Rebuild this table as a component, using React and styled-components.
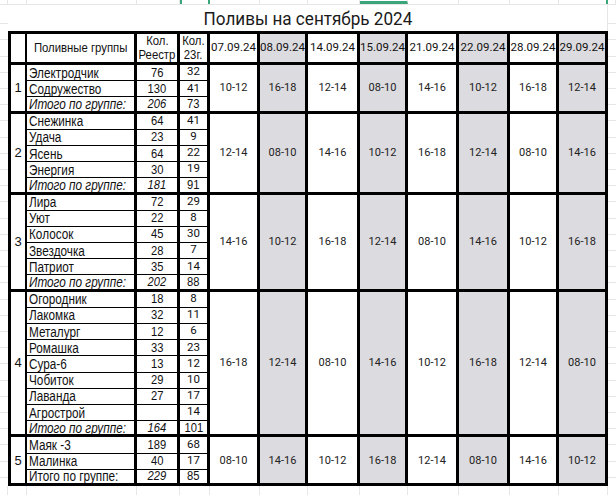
import React from "react";
import styled, { createGlobalStyle, css } from "styled-components";

const ARIAL = `"Liberation Sans", Arial, sans-serif`;
const ROBOTO = `Roboto, "Noto Sans", sans-serif`;

const COLS = [16, 110, 43, 30, 50, 48, 52, 48, 51, 51, 49, 49];
const GRAY = "#dcdbdf";
const GRID = "#e6e6e6";

const DATES = ["07.09.24", "08.09.24", "14.09.24", "15.09.24", "21.09.24", "22.09.24", "28.09.24", "29.09.24"];

const GROUPS = [
  {
    n: 1,
    rows: [["Электродчик", 76, 32], ["Содружество", 130, 41]],
    total: [206, 73],
    times: ["10-12", "16-18", "12-14", "08-10", "14-16", "10-12", "16-18", "12-14"],
  },
  {
    n: 2,
    rows: [["Снежинка", 64, 41], ["Удача", 23, 9], ["Ясень", 64, 22], ["Энергия", 30, 19]],
    total: [181, 91],
    times: ["12-14", "08-10", "14-16", "10-12", "16-18", "12-14", "08-10", "14-16"],
  },
  {
    n: 3,
    rows: [["Лира", 72, 29], ["Уют", 22, 8], ["Колосок", 45, 30], ["Звездочка", 28, 7], ["Патриот", 35, 14]],
    total: [202, 88],
    times: ["14-16", "10-12", "16-18", "12-14", "08-10", "14-16", "10-12", "16-18"],
  },
  {
    n: 4,
    rows: [
      ["Огородник", 18, 8], ["Лакомка", 32, 11], ["Металург", 12, 6], ["Ромашка", 33, 23],
      ["Сура-6", 13, 12], ["Чобиток", 29, 10], ["Лаванда", 27, 17], ["Агрострой", "", 14],
    ],
    total: [164, 101],
    times: ["16-18", "12-14", "08-10", "14-16", "10-12", "16-18", "12-14", "08-10"],
  },
  {
    n: 5,
    rows: [["Маяк -3", 189, 68], ["Малинка", 40, 17]],
    total: [229, 85],
    plainTotal: true,
    times: ["08-10", "14-16", "10-12", "16-18", "12-14", "08-10", "14-16", "10-12"],
  },
];

const GlobalStyle = createGlobalStyle`
  * { box-sizing: border-box; }
  html, body { margin: 0; padding: 0; background: #fff; }
  body { font-family: ${ROBOTO}; color: #111; }
`;

const Page = styled.div`
  width: 616px;
  height: 495px;
  overflow: hidden;
  display: flex;
  flex-direction: column;
  background: #fff;
`;

const TopStrip = styled.div`
  display: flex;
  height: 5px;
  flex: none;
  border-bottom: 1px solid ${GRID};
`;

const StripCell = styled.div`
  flex: none;
  width: ${(p) => p.$w}px;
  border-right: 1px solid ${GRID};
  ${(p) => p.$grow && css`flex: 1;`}
  ${(p) => p.$sideMark && css`
    border-left: 2px solid #3aa57b;
    border-right: 2px solid #3aa57b;
  `}
  ${(p) => p.$baseMark && css`
    border-bottom: 3px solid #3aa57b;
  `}
  ${(p) => p.$edgeMark && css`
    border-right: 2px solid #3aa57b;
  `}
`;

const Middle = styled.div`
  display: flex;
  flex: none;
`;

const Gutter = styled.div`
  flex: none;
  width: 8px;
  background-image: repeating-linear-gradient(
    to bottom,
    transparent 0,
    transparent 15.2px,
    ${GRID} 15.2px,
    ${GRID} 16.2px
  );
  background-position: 0 3px;
`;

const Sheet = styled.div`
  width: 600px;
  flex: none;
  display: flex;
  flex-direction: column;
`;

const Title = styled.div`
  height: 26px;
  display: flex;
  align-items: flex-end;
  justify-content: center;
  padding-bottom: 1px;
  font-family: ${ROBOTO};
  font-size: 19px;
  color: #1a1a1a;
  border-right: 1px solid ${GRID};
`;

/* the sheet renders its text horizontally compressed, like a narrow face */
const Squeeze = styled.span`
  display: inline-block;
  white-space: nowrap;
  transform: scaleX(${(p) => p.$k || 0.84});
  transform-origin: ${(p) => (p.$left ? "left center" : "center")};
`;

const Table = styled.div`
  display: grid;
  grid-template-columns: ${COLS.map((c) => `${c}px`).join(" ")};
  grid-template-rows: 31px;
  grid-auto-rows: 16.2px;
  border-top: 3px solid #000;
  border-left: 3px solid #000;
  background: #fff;
`;

const Cell = styled.div`
  display: flex;
  align-items: center;
  justify-content: ${(p) => p.$align || "center"};
  overflow: hidden;
  white-space: nowrap;
  line-height: 1;
  border-right: ${(p) => p.$right ?? 3}px solid #000;
  border-bottom: ${(p) => (p.$thin ? 1 : 3)}px solid #000;
  background: ${(p) => (p.$shade ? GRAY : "#fff")};
  ${(p) => p.$span && css`grid-row: span ${p.$span};`}
`;

const HeadCell = styled(Cell)`
  flex-direction: column;
  justify-content: center;
  font-family: ${ARIAL};
  font-size: 13.5px;
  line-height: 14px;
  text-align: center;
`;

const DateHead = styled(Cell)`
  font-family: ${ROBOTO};
  font-size: 11.5px;
`;

const GroupNo = styled(Cell)`
  font-family: ${ARIAL};
  font-size: 13px;
`;

const Name = styled(Cell)`
  padding-left: 2px;
  font-family: ${ARIAL};
  font-size: 14px;
  font-style: ${(p) => (p.$italic ? "italic" : "normal")};
`;

const Count = styled(Cell)`
  font-family: ${(p) => (p.$light ? ROBOTO : ARIAL)};
  font-size: ${(p) => (p.$light ? "11.5px" : "13px")};
  font-style: ${(p) => (p.$italic ? "italic" : "normal")};
  padding-bottom: 1px;
`;

const Slot = styled(Cell)`
  font-family: ${ROBOTO};
  font-size: 11px;
  color: #222;
`;

const BottomStrip = styled.div`
  flex: 1;
  display: flex;
`;

const BottomCell = styled.div`
  flex: none;
  width: ${(p) => p.$w}px;
  border-right: 1px solid ${GRID};
  ${(p) => p.$grow && css`flex: 1; border-right: none;`}
`;

const stripWidths = [8, 19, 110, 43, 30, 50, 48, 52, 48, 51, 51, 49, 49];

function Group({ g }) {
  const span = g.rows.length + 1;
  const all = [
    ...g.rows.map((r) => ({ name: r[0], a: r[1], b: r[2] })),
    { name: "Итого по группе:", a: g.total[0], b: g.total[1], total: true },
  ];
  return (
    <>
      {all.map((r, i) => {
        const last = i === all.length - 1;
        return (
          <React.Fragment key={r.name}>
            {i === 0 && (
              <GroupNo $span={span} $right={2}>
                {g.n}
              </GroupNo>
            )}
            <Name $align="flex-start" $thin={!last} $italic={r.total && !g.plainTotal}>
              <Squeeze $left>{r.name}</Squeeze>
            </Name>
            <Count $thin={!last} $italic={r.total}>
              <Squeeze $k={0.86}>{r.a}</Squeeze>
            </Count>
            <Count $thin={!last} $light={!r.total}>
              {r.total ? <Squeeze $k={0.86}>{r.b}</Squeeze> : r.b}
            </Count>
            {i === 0 &&
              g.times.map((t, k) => (
                <Slot key={k} $span={span} $shade={k % 2 === 1}>
                  {t}
                </Slot>
              ))}
          </React.Fragment>
        );
      })}
    </>
  );
}

export default function App() {
  return (
    <Page>
      <GlobalStyle />
      <TopStrip>
        {stripWidths.map((w, i) => (
          <StripCell key={i} $w={w} $sideMark={i === 4} $baseMark={i === 8} $edgeMark={i === 12} />
        ))}
        <StripCell $grow />
      </TopStrip>
      <Middle>
        <Gutter />
        <Sheet>
          <Title>
            <Squeeze $k={0.9}>Поливы на сентябрь 2024</Squeeze>
          </Title>
          <Table>
            <HeadCell $right={2} />
            <HeadCell>
              <Squeeze>Поливные группы</Squeeze>
            </HeadCell>
            <HeadCell>
              <Squeeze>Кол.</Squeeze>
              <Squeeze>Реестр</Squeeze>
            </HeadCell>
            <HeadCell>
              <Squeeze>Кол.</Squeeze>
              <Squeeze>23г.</Squeeze>
            </HeadCell>
            {DATES.map((d, k) => (
              <DateHead key={d} $shade={k % 2 === 1}>
                {d}
              </DateHead>
            ))}
            {GROUPS.map((g) => (
              <Group key={g.n} g={g} />
            ))}
          </Table>
        </Sheet>
        <Gutter />
      </Middle>
      <BottomStrip>
        {stripWidths.map((w, i) => (
          <BottomCell key={i} $w={w} />
        ))}
        <BottomCell $grow />
      </BottomStrip>
    </Page>
  );
}
